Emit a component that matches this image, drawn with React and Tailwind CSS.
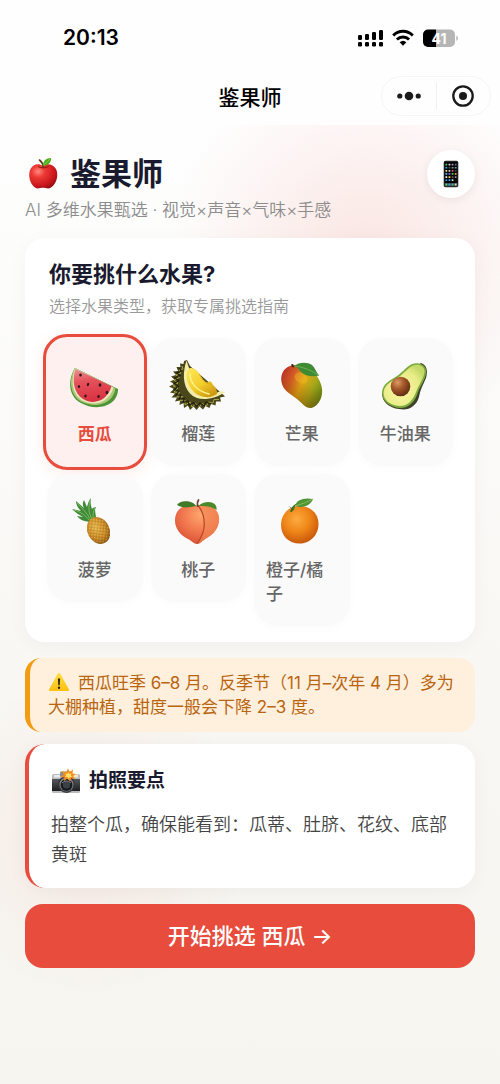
import { useState } from 'react'
import clsx from 'clsx'

const AppleIcon = ({ className }) => (
  <svg viewBox="0 0 34 36" className={className} aria-hidden="true">
    <defs>
      <radialGradient id="apple" cx="0.32" cy="0.3" r="0.8">
        <stop offset="0" stopColor="#ff8a80" />
        <stop offset="0.3" stopColor="#ee3a35" />
        <stop offset="0.75" stopColor="#c8161c" />
        <stop offset="1" stopColor="#8f0d13" />
      </radialGradient>
    </defs>
    <path d="M18 10C14 7 8 8 5.500 13C2.500 19 5 28 10 31.500C13 33.500 15.500 31.500 18 31.800C20.500 31.500 23 33.500 26 31.500C31.500 28 34 19 31 13C28 8 22 7 18 10Z" fill="url(#apple)" />
    <path d="M13 10.500C15.500 12.300 21 12.300 23.500 10.500" stroke="#8f1414" strokeWidth="1" fill="none" />
    <path d="M18.500 11.500C18 8 16.500 5.500 14.500 4" stroke="#5d3a1e" strokeWidth="1.600" fill="none" strokeLinecap="round" />
    <path d="M18 9.500C18 5 21 2 26 2C26.500 6 23 10 18 9.500Z" fill="#4cae1c" />
    <path d="M18.500 9C21 7 23 5 25 3" stroke="#8fdb4d" strokeWidth="0.700" fill="none" />
  </svg>
)

const PHONE_COLORS = [
  '#43c95a', '#cfd8dc', '#b07cc6', '#6b6f78',
  '#2aa9e0', '#455a64', '#a1887f', '#4aa3df',
  '#f4e58a', '#d0d4da', '#e8554a', '#3c4250',
  '#4db6e8', '#8e5bd0', '#46c269', '#f39c33',
  '#f5f5f5', '#f7d54a', '#6d5a45', '#8b8f96',
  '#2196f3', '#42a5f5', '#e0e0e0', '#111111',
]

const PhoneIcon = ({ className }) => (
  <svg viewBox="0 0 16 28" className={className} aria-hidden="true">
    <rect x="0.700" y="0.700" width="14.600" height="26.600" rx="1.800" fill="#2c2c2e" />
    <rect x="1.500" y="1.800" width="13" height="24.400" rx="1" fill="#050505" />
    {PHONE_COLORS.map((color, i) => (
      <rect key={i} x={2.4 + (i % 4) * 3.1} y={3.8 + Math.floor(i / 4) * 3.1} width="1.900" height="1.700" rx="0.400" fill={color} />
    ))}
    <rect x="1.500" y="23" width="13" height="3.200" fill="#3a4246" />
    <rect x="2.400" y="23.600" width="1.900" height="1.900" fill="#4cd964" />
    <rect x="5.500" y="23.600" width="1.900" height="1.900" fill="#3ca7f0" />
    <rect x="8.600" y="23.600" width="1.900" height="1.900" fill="#45c96b" />
    <rect x="11.700" y="23.600" width="1.900" height="1.900" fill="#d9d9d9" />
  </svg>
)

const WatermelonIcon = () => (
  <svg viewBox="0 0 56 56" className="size-14" aria-hidden="true">
    <defs>
      <linearGradient id="melon" x1="0.3" y1="0" x2="0.5" y2="1">
        <stop offset="0" stopColor="#e98a8c" />
        <stop offset="0.35" stopColor="#e4535c" />
        <stop offset="1" stopColor="#d92f3f" />
      </linearGradient>
    </defs>
    <path d="M8 10C0 23 2 39 14 45C30 54 51 48 51 31Z" fill="#4e9434" />
    <path d="M8 10C1 22 3 37 14 43.500C29 51 46 46 48.500 30.500Z" fill="#a8c878" />
    <path d="M8.200 10.500C3.500 22 5 36 15 42.500C28 49 42 45 46.500 29.500Z" fill="#ece5bd" />
    <path d="M8.500 11C4.800 22 6.500 35 16 41C27 47.500 40 43 44.500 28.300Z" fill="url(#melon)" />
    <g fill="#31171a">
      <ellipse cx="13.500" cy="17" rx="1.300" ry="1.600" />
      <ellipse cx="21" cy="26.500" rx="1.100" ry="1.700" transform="rotate(15 21 26.500)" />
      <ellipse cx="12" cy="28.500" rx="1.100" ry="1.500" />
      <ellipse cx="33" cy="27" rx="1.400" ry="1.700" />
      <ellipse cx="18.500" cy="38" rx="1.200" ry="1.500" transform="rotate(25 18.500 38)" />
      <ellipse cx="31.500" cy="38.500" rx="1.200" ry="1.600" transform="rotate(20 31.500 38.500)" />
      <ellipse cx="40" cy="34.500" rx="1.400" ry="1.700" />
    </g>
  </svg>
)

const DurianIcon = () => (
  <svg viewBox="0 0 56 56" className="size-14 overflow-visible" aria-hidden="true">
    <defs>
      <linearGradient id="durian" x1="0" y1="0" x2="0.7" y2="1">
        <stop offset="0" stopColor="#ffe85c" />
        <stop offset="0.6" stopColor="#f3cd2c" />
        <stop offset="1" stopColor="#cf9a12" />
      </linearGradient>
    </defs>
    <path d="M17 2L14 3L13.500 6L10 5.500L10.500 9L6.500 9L8 13L3 13.500L6 17L1 18.500L4.500 21.500L0 23.500L4 26L-1 28.500L4 31L0 34.500L5 35.500L1.500 39.500L7 39.500L5 43.500L10 42.500L9.500 47L13.500 45L14 50L18 47.500L20 52L23.500 48.500L26.500 52L29.500 48.500L33 51.500L35.500 48L39.500 50L41 46L45.500 47.500L46 43.500L51 43.500L50 39.500L55 38.500L53 36.500L20 8Z" fill="#4a471b" />
    <g fill="none" stroke="#a6a24a" strokeWidth="1">
      <path d="M12 8L13 11L9 12L11 15L6 17L9.500 19.500L4 22L8 25L3 28L8 30L4 34L9.500 34.500L7 39L12.500 38.500L10 42.500L15 42L15 47L20 44L22 49L26 45.500L29.500 49L32 45.500L36.500 48L38.500 44L43 45L44 41.500L49 41.500" />
    </g>
    <g fill="none" stroke="#1f1e0c" strokeWidth="1.100">
      <path d="M9 10L11.500 13L6.500 15L10 17.500L4.500 20L9 22.500L4 25.500L8.500 28L4 31.500L9 33L6 37L11 37L9 41L14.500 40.500L13 44.500L18 43L19 47.500L23.500 44.500L26.500 48.500L30 45L34 48L36 44L41 46" />
    </g>
    <path d="M16.500 2.500C13 13 12 27 20 35.500C28 44 43 42 55.500 34C52 33 49 33 46.500 35L19 10Z" fill="#f3eda8" />
    <path d="M18 12C21 8 26 11 29 15C32 20 34 24 38 24.500C40 21.500 42 24 43 27C46 29 47.500 33 47 36C41 41 29 40 23 33C17 26.500 15 18 18 12Z" fill="url(#durian)" />
    <path d="M20 16C20 24 26 33 39 36" stroke="#fff38a" strokeWidth="1.500" fill="none" strokeLinecap="round" />
    <path d="M29 16C32 21 34 25 38 25.500C41 26 43 28 45 31" stroke="#d9a91c" strokeWidth="0.800" fill="none" />
  </svg>
)

const MangoIcon = () => (
  <svg viewBox="0 0 56 56" className="size-14" aria-hidden="true">
    <defs>
      <linearGradient id="mango" x1="0" y1="0.2" x2="1" y2="0.7">
        <stop offset="0" stopColor="#b83226" />
        <stop offset="0.25" stopColor="#d35a25" />
        <stop offset="0.5" stopColor="#e2a814" />
        <stop offset="0.75" stopColor="#a5a81a" />
        <stop offset="1" stopColor="#5f8413" />
      </linearGradient>
      <linearGradient id="mangoShade" x1="0.6" y1="0.4" x2="0.4" y2="1">
        <stop offset="0" stopColor="#7a3a00" stopOpacity="0" />
        <stop offset="1" stopColor="#6b3000" stopOpacity="0.5" />
      </linearGradient>
    </defs>
    <path d="M20 7C11 8 6 15 7.500 24C9 33 17 36 23 41C28 45 31 50 37 50C45 48 50 38 47.500 28C45 16 33 6 20 7Z" fill="url(#mango)" />
    <path d="M20 7C11 8 6 15 7.500 24C9 33 17 36 23 41C28 45 31 50 37 50C45 48 50 38 47.500 28C45 16 33 6 20 7Z" fill="url(#mangoShade)" />
    <ellipse cx="27" cy="20" rx="7" ry="5" fill="#f5c22b" opacity="0.350" transform="rotate(30 27 20)" />
    <path d="M17 6.500L19 6L20.500 9.500L18 9Z" fill="#3a2318" />
    <path d="M20 8C25 4 33 3.500 38 7C41 9.500 42 14 45 17.500C38 19 31 18 27 14C25 11.500 23 9 20 8Z" fill="#3f8b33" />
    <path d="M20 8C29 9 37 12 45 17.500" stroke="#79b658" strokeWidth="0.800" fill="none" />
  </svg>
)

const AvocadoIcon = () => (
  <svg viewBox="0 0 56 56" className="size-14" aria-hidden="true">
    <defs>
      <radialGradient id="avoFlesh" cx="0.42" cy="0.6" r="0.65">
        <stop offset="0" stopColor="#fbf7a6" />
        <stop offset="0.7" stopColor="#e9ec88" />
        <stop offset="1" stopColor="#c3da66" />
      </radialGradient>
      <radialGradient id="avoPit" cx="0.35" cy="0.3" r="0.75">
        <stop offset="0" stopColor="#dc9a63" />
        <stop offset="0.45" stopColor="#a4572a" />
        <stop offset="1" stopColor="#5d2a12" />
      </radialGradient>
    </defs>
    <path d="M44 5C50 7 51 13 49 20C46 27 43 32 42 39C39 49 31 53 22 51C12 50 5 44 5 35Z" fill="#3e4029" />
    <path d="M35 6C41 4 48 6 49 12C50 19 44 27 41 34C38 44 32 50 23 50C12 49 5 43 5 34C6 25 14 22 20 18C26 14 29 9 35 6Z" fill="#7dab3e" />
    <path d="M36 7.500C41 5.500 47 7.500 47.500 13C47.500 20 42 26 39.500 33C36 42 31 48 23 48C13 47.500 6.500 42 6.500 34.500C7.500 26 15 23.500 21 19.500C27 15.500 31 10 36 7.500Z" fill="url(#avoFlesh)" />
    <circle cx="23.500" cy="28.500" r="9.800" fill="url(#avoPit)" />
  </svg>
)

const PineappleIcon = () => (
  <svg viewBox="0 0 56 56" className="size-14" aria-hidden="true">
    <defs>
      <radialGradient id="pine" cx="0.45" cy="0.35" r="0.7">
        <stop offset="0" stopColor="#edbd50" />
        <stop offset="0.6" stopColor="#cb8a24" />
        <stop offset="1" stopColor="#7e4c10" />
      </radialGradient>
      <pattern id="pineDots" width="3" height="3" patternUnits="userSpaceOnUse" patternTransform="rotate(35)">
        <path d="M0 0H3M0 0V3" stroke="#8b5a16" strokeWidth="0.700" />
        <circle cx="1.600" cy="1.600" r="0.600" fill="#f7da83" />
      </pattern>
    </defs>
    <path d="M22 28C17 27 13 26 10 22L16 23C12 21 8 18 5 15L14 17C11 14 9 11 9 7L17 14C15 11 16 8 17 6L20 13C21 9 22 6 24 4C23 8 24 12 25 15C26 14 27 13 29 13C27 16 29 20 29 24Z" fill="#418a3b" />
    <g fill="none" stroke="#83c05a" strokeWidth="0.900">
      <path d="M10 9C15 14 20 19 23 25" />
      <path d="M23 7C21 14 22 20 25 25" />
      <path d="M7 16C14 18 18 21 22 26" />
      <path d="M28 14C26 17 26 21 26 24" />
    </g>
    <g transform="rotate(-28 31.500 36.500)">
      <ellipse cx="31.500" cy="36.500" rx="11" ry="14" fill="url(#pine)" />
      <ellipse cx="31.500" cy="36.500" rx="11" ry="14" fill="url(#pineDots)" opacity="0.600" />
    </g>
  </svg>
)

const PeachIcon = () => (
  <svg viewBox="0 0 56 56" className="size-14" aria-hidden="true">
    <defs>
      <radialGradient id="peach" cx="0.6" cy="0.25" r="0.85">
        <stop offset="0" stopColor="#ffa86f" />
        <stop offset="0.45" stopColor="#f37c52" />
        <stop offset="1" stopColor="#d6492f" />
      </radialGradient>
    </defs>
    <path d="M27 12C19 9 8 12 5.500 22C3 33 10 41 18 45C22 47 24 50 27 50C30 50 32 47 36 44.500C45 40 51 31 48.500 21C46 13 37 9 27 12Z" fill="url(#peach)" />
    <path d="M27 12C31 16 35 24 34 34C32 42 30 47 27 50C30 50 32 47 36 44.500C45 40 51 31 48.500 21C46 13 37 9 27 12Z" fill="#f08752" opacity="0.600" />
    <path d="M27.500 11C33 17 35 25 34 34C32.500 42 30 46 27 49.500" stroke="#b8452a" strokeWidth="1.200" fill="none" />
    <path d="M26.500 12C17 14 12 14 7 11C9 7 17 6 22 8.500C24 9.500 25.500 11 26.500 12Z" fill="#3f7a27" />
    <path d="M28.500 12C32 8 39 7 43 9C46 10.500 47 13 46.500 16C41 12 35 12 28.500 12Z" fill="#4b8a2c" />
    <path d="M27.500 12C27 9 27 8 28.500 6" stroke="#6b4026" strokeWidth="1.800" fill="none" strokeLinecap="round" />
  </svg>
)

const OrangeIcon = () => (
  <svg viewBox="0 0 56 56" className="size-14" aria-hidden="true">
    <defs>
      <radialGradient id="orange" cx="0.42" cy="0.35" r="0.7">
        <stop offset="0" stopColor="#fdab40" />
        <stop offset="0.5" stopColor="#ef8518" />
        <stop offset="1" stopColor="#c25207" />
      </radialGradient>
    </defs>
    <path d="M25.500 12C36 12 44.500 19 44.500 30C44.500 42 35 49.500 25.500 49.500C15 49.500 7 42 7 31C7 20 15 12 25.500 12Z" fill="url(#orange)" />
    <path d="M14 12L18 14L21 13L20 16L17 18L18 15Z" fill="#527a24" />
    <path d="M17 18C18 13 21 11 24 10" stroke="#3f6b1c" strokeWidth="1.800" fill="none" />
    <path d="M21 12C22 6 30 3 39 5C37 10 31 15 21 12Z" fill="#4f9435" />
    <path d="M21 12C28 10 33 8 39 5" stroke="#94c568" strokeWidth="0.800" fill="none" />
  </svg>
)

const CameraIcon = ({ className }) => (
  <svg viewBox="0 0 30 26" className={className} aria-hidden="true">
    <defs>
      <linearGradient id="camBody" x1="0" y1="0" x2="0" y2="1">
        <stop offset="0" stopColor="#55575a" />
        <stop offset="1" stopColor="#1d1e20" />
      </linearGradient>
    </defs>
    <rect x="1" y="6" width="28" height="19" rx="1.500" fill="#b9bbbd" />
    <rect x="9" y="3.500" width="12" height="5" rx="1" fill="#8d8f92" />
    <rect x="3" y="7" width="6" height="2.500" fill="#e9ebec" />
    <rect x="22" y="6.500" width="5" height="3" fill="#efe7c5" />
    <rect x="1" y="11" width="28" height="12" fill="url(#camBody)" />
    <circle cx="15.500" cy="16.500" r="8.500" fill="#34363a" />
    <circle cx="15.500" cy="16.500" r="7" fill="#85888c" />
    <circle cx="15.500" cy="17" r="6" fill="#191b1f" />
    <circle cx="15.500" cy="17" r="3.600" fill="#3b4148" />
    <path d="M11 15Q15.500 11 20 15" stroke="#9ca3aa" strokeWidth="0.800" fill="none" />
    <path d="M17 0.500L18.800 4L22 1.500L21.500 5.500L25 6L22 8L24.500 11L20.500 10L19 13.500L16.500 10.500L13 13L13.500 9.500L9.500 9L12.800 6.800L10.500 3L15 4.500Z" fill="#f58d1d" />
    <path d="M17.300 4L18.500 6L20.500 5.500L19.800 7.500L21 9L18.800 9L17.500 11L16.300 8.800L14 9L15.200 7.300L14.200 5.500L16.500 6Z" fill="#ffe36b" />
  </svg>
)

const WarningIcon = ({ className }) => (
  <svg viewBox="0 0 22 20" className={className} aria-hidden="true">
    <defs>
      <linearGradient id="warn" x1="0" y1="0" x2="0" y2="1">
        <stop offset="0" stopColor="#ffdf4a" />
        <stop offset="1" stopColor="#fdc010" />
      </linearGradient>
    </defs>
    <path d="M11 1Q12 1 12.500 2L21 17.500Q21.500 19 20 19H2Q0.500 19 1 17.500L9.500 2Q10 1 11 1Z" fill="url(#warn)" />
    <path d="M9.900 6.500H12.100L11.700 13.300H10.300Z" fill="#2b2412" />
    <circle cx="11" cy="15.800" r="1.200" fill="#2b2412" />
  </svg>
)

const StatusIcons = () => (
  <svg viewBox="0 0 102 20" className="h-5 w-[102px]" aria-hidden="true">
    {/* Dual SIM signal */}
    {[[0, 7, 5], [7, 6, 6], [14, 4, 8], [21, 2, 10]].map(([x, y, h]) => (
      <g key={x}>
        <rect x={x + 1} y={y} width="4" height={h} rx="1.300" />
        <rect x={x + 1} y="14" width="4" height="4.500" rx="1.300" />
      </g>
    ))}
    {/* Wifi */}
    <g fill="none" stroke="#000" strokeWidth="2.900">
      <path d="M36.200 7.500A13.500 13.500 0 0 1 55.800 7.500" />
      <path d="M39.900 11.500A8.600 8.600 0 0 1 52.100 11.500" />
    </g>
    <path d="M46 17.800L42.600 14.300A5 5 0 0 1 49.400 14.300Z" />
    {/* Battery */}
    <path d="M71 1.500H79V19H71A5 5 0 0 1 66 14V6.500A5 5 0 0 1 71 1.500Z" />
    <path d="M79 1.500H93A5 5 0 0 1 98 6.500V14A5 5 0 0 1 93 19H79Z" fill="#b5b5b5" />
    <path d="M99.300 7.500Q101 8.500 101 10.250T99.300 13Z" fill="#b5b5b5" />
    <text x="82" y="15.500" textAnchor="middle" fill="#fff" fontSize="14" fontWeight="700" fontFamily="Inter, sans-serif">41</text>
  </svg>
)

const fruits = [
  { id: 'watermelon', name: '西瓜', Icon: WatermelonIcon },
  { id: 'durian', name: '榴莲', Icon: DurianIcon },
  { id: 'mango', name: '芒果', Icon: MangoIcon },
  { id: 'avocado', name: '牛油果', Icon: AvocadoIcon },
  { id: 'pineapple', name: '菠萝', Icon: PineappleIcon },
  { id: 'peach', name: '桃子', Icon: PeachIcon },
  { id: 'orange', name: '橙子/橘子', Icon: OrangeIcon },
]

const FruitTile = ({ fruit, active, onSelect }) => (
  <button
    type="button"
    aria-pressed={active}
    onClick={onSelect}
    className={clsx(
      'flex flex-col items-center gap-2 rounded-3xl text-left text-[17px] leading-6',
      active
        ? '-m-1 border-[3px] border-[#e74c3c] bg-[#fef0ef] px-3 py-[21px] font-bold text-[#e74c3c] shadow-[0_4px_16px_rgba(231,76,60,0.1)]'
        : 'bg-[#fafafa] px-3 py-5 font-medium text-[#666] shadow-[0_2px_12px_rgba(0,0,0,0.02)]'
    )}
  >
    <fruit.Icon />
    <span>{fruit.name}</span>
  </button>
)

const NavBar = () => (
  <header className="bg-[#fefefe]">
    <div className="flex h-[75px] items-center justify-between pr-[41px] pl-[63px]">
      <span className="text-[21px] font-semibold text-black">20:13</span>
      <StatusIcons />
    </div>
    <div className="grid h-[50px] grid-cols-[1fr_auto_1fr] items-start px-[9px]">
      <span />
      <span className="text-[21px] leading-[46px] font-medium text-black">鉴果师</span>
      <div className="mt-px flex h-10 w-[110px] items-center justify-self-end rounded-full border border-[#f5f5f5]">
        <button type="button" aria-label="更多" className="flex flex-1 justify-center">
          <svg viewBox="0 0 26 10" className="h-[10px] w-[26px]" fill="#1a1a1a">
            <circle cx="3.800" cy="5" r="2.600" />
            <circle cx="13" cy="5" r="4.300" />
            <circle cx="22.200" cy="5" r="2.600" />
          </svg>
        </button>
        <span className="h-[26px] w-px bg-[#f0f0f0]" />
        <button type="button" aria-label="关闭" className="flex flex-1 justify-center">
          <svg viewBox="0 0 24 24" className="size-6" fill="none">
            <circle cx="12" cy="12" r="9.700" stroke="#1a1a1a" strokeWidth="2.300" />
            <circle cx="12" cy="12" r="4" fill="#1a1a1a" />
          </svg>
        </button>
      </div>
    </div>
  </header>
)

export default function App() {
  const [selectedId, setSelectedId] = useState('watermelon')
  const selected = fruits.find((fruit) => fruit.id === selectedId)

  return (
    <div className="flex min-h-screen flex-col bg-[#fefefe] font-['Inter','Noto_Sans_CJK_SC',sans-serif]">
      <NavBar />

      <main className="flex-1 bg-[radial-gradient(circle_at_365px_125px,rgba(231,76,60,0.13),rgba(231,76,60,0)_195px),radial-gradient(circle_at_90px_710px,rgba(231,76,60,0.08),rgba(231,76,60,0)_160px),linear-gradient(180deg,#fefefe,#f8f7f3_60%,#f6f5f0)] px-[25px] pt-[25px] pb-10">
        <div className="flex items-start justify-between">
          <div>
            <h1 className="flex h-12 items-center gap-[11px] text-[31px] font-bold text-[#1a1a2e]">
              <AppleIcon className="h-9 w-[34px]" />
              鉴果师
            </h1>
            <p className="text-[17px] leading-6 font-[350] text-[#8c8c8c]">AI 多维水果甄选 · 视觉×声音×气味×手感</p>
          </div>
          <button
            type="button"
            aria-label="设备"
            className="flex size-12 items-center justify-center rounded-full bg-white shadow-[0_2px_10px_rgba(0,0,0,0.07)]"
          >
            <PhoneIcon className="h-7 w-4" />
          </button>
        </div>

        {/* Fruit picker */}
        <section className="mt-4 rounded-[20px] bg-white px-[22px] pt-[22px] pb-4 shadow-[0_4px_20px_rgba(0,0,0,0.04)]">
          <div className="px-0.5">
            <h2 className="text-[22px] leading-7 font-bold text-[#1a1a2e]">你要挑什么水果?</h2>
            <p className="mt-1.5 text-base leading-6 font-[350] text-[#999]">选择水果类型，获取专属挑选指南</p>
          </div>
          <div className="mt-5 grid grid-cols-4 items-start gap-2">
            {fruits.map((fruit) => (
              <FruitTile
                key={fruit.id}
                fruit={fruit}
                active={fruit.id === selectedId}
                onSelect={() => setSelectedId(fruit.id)}
              />
            ))}
          </div>
        </section>

        {/* Season notice */}
        <p className="mt-4 rounded-2xl border-l-[5px] border-[#f39c12] bg-[#fff0de] px-[18px] py-[13px] text-[17px] leading-6 text-[#b9650f]">
          <WarningIcon className="mr-2 inline-block h-5 w-[22px] align-[-3px]" />
          西瓜旺季 6–8 月。反季节（11 月–次年 4 月）多为大棚种植，甜度一般会下降 2–3 度。
        </p>

        {/* Photo tips */}
        <section className="mt-3 rounded-[20px] border-l-4 border-[#e74c3c] bg-white px-[22px] pt-[22px] pb-[18px] shadow-[0_4px_20px_rgba(0,0,0,0.04)]">
          <h3 className="flex items-center gap-2 text-[19px] leading-[30px] font-bold text-[#1a1a2e]">
            <CameraIcon className="h-[26px] w-[30px]" />
            拍照要点
          </h3>
          <p className="mt-[14px] text-lg leading-[30px] font-[350] text-[#444]">
            拍整个瓜，确保能看到：瓜蒂、肚脐、花纹、底部黄斑
          </p>
        </section>

        <button
          type="button"
          className="mt-4 flex h-16 w-full items-center justify-center rounded-[18px] bg-[#e74c3c] text-[22px] font-medium text-white"
        >
          开始挑选 {selected.name} →
        </button>
      </main>
    </div>
  )
}
